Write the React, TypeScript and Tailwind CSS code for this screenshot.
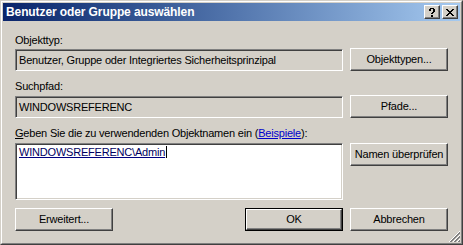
import React from 'react';

const raised =
  'border border-t-white border-l-white border-r-[#404040] border-b-[#404040] shadow-[inset_-1px_-1px_0_#808080]';
const sunken =
  'border border-t-[#808080] border-l-[#808080] border-r-white border-b-white shadow-[inset_1px_1px_0_#404040,inset_-1px_-1px_0_#d4d0c8]';

const Btn: React.FC<{ label: React.ReactNode; className?: string; def?: boolean }> = ({ label, className = '', def }) => {
  if (def) {
    return (
      <div className={`border border-black ${className}`}>
        <div className={`${raised} w-full h-full flex items-center justify-center`}>{label}</div>
      </div>
    );
  }
  return <div className={`${raised} flex items-center justify-center ${className}`}>{label}</div>;
};

const App: React.FC = () => {
  return (
    <div
      className="w-[463px] h-[245px] bg-[#d4d0c8] border border-t-[#d4d0c8] border-l-[#d4d0c8] border-r-[#404040] border-b-[#404040] text-[11px] tracking-[-0.2px] text-black leading-[13px]"
      style={{ fontFamily: '"Liberation Sans", Arial, sans-serif' }}
    >
      <div className="w-full h-full border border-t-white border-l-white border-r-[#808080] border-b-[#808080] p-px flex flex-col relative">
        {/* Titelleiste */}
        <div className="h-[18px] bg-gradient-to-r from-[#0a246a] to-[#a6caf0] flex items-center pl-[3px] pr-[2px]">
          <span className="text-white font-bold text-[12px] tracking-[-0.1px] flex-1">Benutzer oder Gruppe auswählen</span>
          <div className={`${raised} w-[16px] h-[14px] bg-[#d4d0c8] flex items-center justify-center`}>
            <svg width="6" height="9" viewBox="0 0 6 9">
              <path d="M1 0h4v1H1zM0 1h2v2H0zM4 1h2v3H4zM3 4h2v1H3zM2 5h2v1H2zM2 7h2v2H2z" fill="#000" />
            </svg>
          </div>
          <div className={`${raised} w-[16px] h-[14px] bg-[#d4d0c8] flex items-center justify-center ml-[2px]`}>
            <svg width="8" height="7" viewBox="0 0 8 7">
              <path d="M0 0h2v1H0zM6 0h2v1H6zM1 1h2v1H1zM5 1h2v1H5zM2 2h4v1H2zM3 3h2v1H3zM2 4h4v1H2zM1 5h2v1H1zM5 5h2v1H5zM0 6h2v1H0zM6 6h2v1H6z" fill="#000" />
            </svg>
          </div>
        </div>

        <div className="flex flex-col px-[12px] pt-[13px]">
          <div className="h-[13px]">Objekttyp:</div>
          <div className="flex gap-[7px] mt-[2px]">
            <div className={`${sunken} w-[328px] h-[22px] flex items-center pl-[3px]`}>
              Benutzer, Gruppe oder Integriertes Sicherheitsprinzipal
            </div>
            <Btn label="Objekttypen..." className="w-[98px] h-[23px] -mt-px" />
          </div>

          <div className="h-[13px] mt-[9px]">Suchpfad:</div>
          <div className="flex gap-[7px] mt-[3px]">
            <div className={`${sunken} w-[328px] h-[22px] flex items-center pl-[3px]`}>WINDOWSREFERENC</div>
            <Btn label="Pfade..." className="w-[98px] h-[23px] -mt-px" />
          </div>

          <div className="h-[13px] mt-[9px]">
            <span className="underline">G</span>eben Sie die zu verwendenden Objektnamen ein (
            <span className="text-[#0000cc] underline">Beispiele</span>):
          </div>
          <div className="flex gap-[7px] mt-[3px]">
            <div className={`${sunken} w-[328px] h-[57px] bg-white pl-[3px] pt-[2px]`}>
              <span className="underline decoration-[#000080] text-[#000060] border-r border-black pr-px">WINDOWSREFERENC\Admin</span>
            </div>
            <Btn label="Namen überprüfen" className="w-[98px] h-[23px]" />
          </div>

          <div className="flex mt-[8px]">
            <Btn label="Erweitert..." className="w-[98px] h-[23px]" />
            <div className="flex-1" />
            <Btn label="OK" def className="w-[98px] h-[23px]" />
            <Btn label="Abbrechen" className="w-[98px] h-[23px] ml-[7px]" />
          </div>
        </div>

        {/* Größenänderungsgriff */}
        <svg className="absolute right-0 bottom-0" width="13" height="13" viewBox="0 0 13 13">
          <path d="M12 1L1 12M12 5L5 12M12 9L9 12" stroke="#fff" strokeWidth="1" />
          <path d="M12 2L2 12M12 3L3 12M12 6L6 12M12 7L7 12M12 10L10 12M12 11L11 12" stroke="#808080" strokeWidth="1" />
        </svg>
      </div>
    </div>
  );
};

export default App;
